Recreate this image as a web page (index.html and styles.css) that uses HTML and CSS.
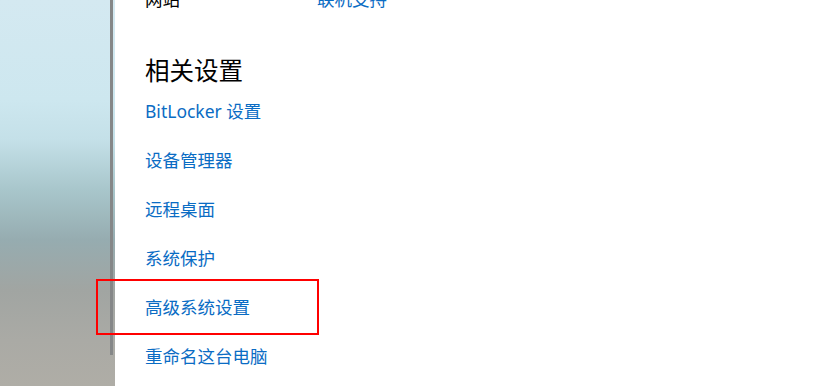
FILE: index.html
```html
<!DOCTYPE html>
<html lang="zh-CN">
<head>
<meta charset="utf-8">
<title>相关设置</title>
<link rel="stylesheet" href="styles.css">
</head>
<body>
<div class="page">
  <aside class="desktop">
    <div class="scrollbar"></div>
  </aside>
  <main class="content">
    <div class="info-row">
      <span class="info-label">网站</span>
      <a class="link info-value" href="#">联机支持</a>
    </div>
    <h2 class="section-title">相关设置</h2>
    <ul class="links">
      <li class="link-row"><a class="link" href="#">BitLocker 设置</a></li>
      <li class="link-row"><a class="link" href="#">设备管理器</a></li>
      <li class="link-row"><a class="link" href="#">远程桌面</a></li>
      <li class="link-row"><a class="link" href="#">系统保护</a></li>
      <li class="link-row"><a class="link" href="#">高级系统设置</a></li>
      <li class="link-row"><a class="link" href="#">重命名这台电脑</a></li>
    </ul>
  </main>
  <div class="highlight"></div>
</div>
</body>
</html>
```
FILE: styles.css
```css
html, body {
  margin: 0;
  padding: 0;
  width: 816px;
  height: 386px;
  overflow: hidden;
  background: #ffffff;
}
body {
  font-family: "Noto Sans", "Noto Sans CJK SC", sans-serif;
}
.page {
  position: relative;
  display: flex;
  width: 816px;
  height: 386px;
  overflow: hidden;
}
.desktop {
  flex: 0 0 115px;
  height: 386px;
  padding-left: 110px;
  box-sizing: border-box;
  background: linear-gradient(to bottom,
    #d4e9f1 0px,
    #cde7ef 100px,
    #c4e0e8 140px,
    #a8c6cb 190px,
    #96acb0 240px,
    #a1a5a2 290px,
    #aaaaa5 340px,
    #afada6 386px);
}
.scrollbar {
  width: 3px;
  height: 355px;
  background: #858788;
}
.content {
  flex: 1;
  padding-left: 30px;
  color: #000;
}
.info-row {
  display: flex;
  height: 20px;
  margin-top: -11px;
  line-height: 20px;
  font-size: 17.5px;
}
.info-label {
  width: 172px;
}
.link {
  color: #0a6cc4;
  text-decoration: none;
}
.section-title {
  margin: 47px 0 0;
  height: 30px;
  line-height: 30px;
  font-size: 24.5px;
  font-weight: normal;
  color: #000;
}
.links {
  list-style: none;
  margin: 0;
  padding: 0;
}
.link-row {
  height: 49px;
  display: flex;
  align-items: center;
  font-size: 17.5px;
}
.highlight {
  position: absolute;
  left: 96px;
  top: 279px;
  width: 219px;
  height: 52px;
  border: 2px solid #ff0000;
}
```
